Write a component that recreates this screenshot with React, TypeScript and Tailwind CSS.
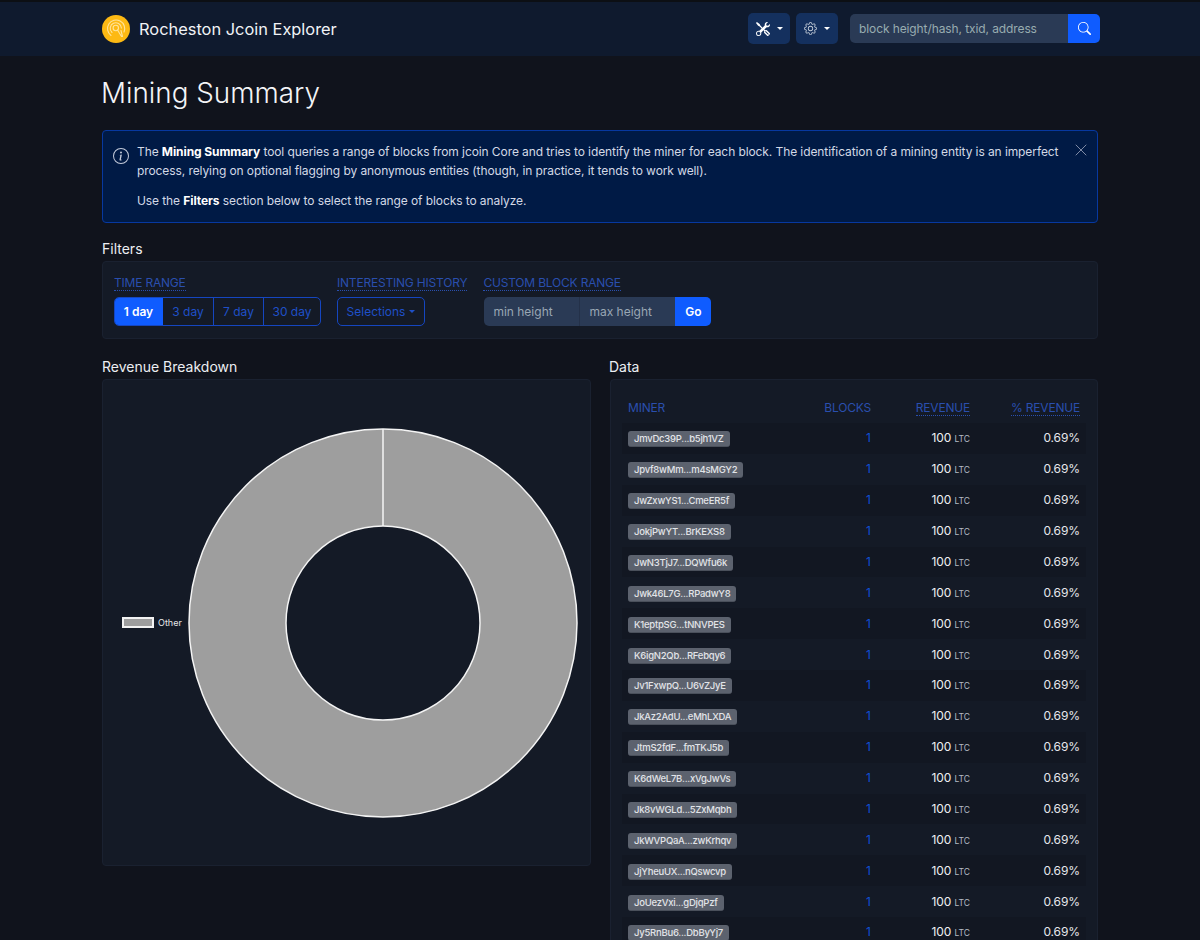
import React from "react";
import { BsTools, BsGear, BsSearch, BsInfoCircle } from "react-icons/bs";
import { X } from "lucide-react";

const miners = [
  "JmvDc39P...b5jh1VZ",
  "Jpvf8wMm...m4sMGY2",
  "JwZxwYS1...CmeER5f",
  "JokjPwYT...BrKEXS8",
  "JwN3TjJ7...DQWfu6k",
  "Jwk46L7G...RPadwY8",
  "K1eptpSG...tNNVPES",
  "K6igN2Qb...RFebqy6",
  "Jv1FxwpQ...U6vZJyE",
  "JkAz2AdU...eMhLXDA",
  "JtmS2fdF...fmTKJ5b",
  "K6dWeL7B...xVgJwVs",
  "Jk8vWGLd...5ZxMqbh",
  "JkWVPQaA...zwKrhqv",
  "JjYheuUX...nQswcvp",
  "JoUezVxi...gDjqPzf",
  "Jy5RnBu6...DbByYj7",
];

function Caret() {
  return <span className="inline-block w-0 h-0 border-l-[3px] border-r-[3px] border-t-[3px] border-l-transparent border-r-transparent border-t-current" />;
}

function Logo() {
  return (
    <svg width="28" height="28" viewBox="0 0 28 28" fill="none">
      <circle cx="14" cy="14" r="14" fill="#fdb913" />
      <g stroke="#ffe39a" strokeWidth="1.1" fill="none" strokeLinecap="round">
        <path d="M9 20.5A8.6 8.6 0 1 1 22 17" />
        <path d="M10 17.5A5.6 5.6 0 1 1 19.4 13" />
        <circle cx="13.8" cy="13" r="2.7" />
        <path d="M15.5 15l4 6.5M19 15.5l1.5 6" />
      </g>
    </svg>
  );
}

function Label({ children }: { children: React.ReactNode }) {
  return (
    <span className="text-[12px] leading-[15px] tracking-[-0.2px] uppercase text-[#2a4fae] border-b border-dotted border-[#2a4fae]">
      {children}
    </span>
  );
}

export default function App() {
  return (
    <div className="h-[940px] overflow-hidden bg-[#10131c] text-[#e4e7ec] font-['Inter',sans-serif]">
      <header className="h-[56px] bg-[#0f1a2e] border-t-2 border-[#0c0f14]">
        <div className="w-[996px] mx-auto h-full flex items-center pb-[1px]">
          <Logo />
          <span className="ml-[9px] mt-[1px] text-[16.4px] font-normal text-[#f1f3f6]">Rocheston Jcoin Explorer</span>
          <div className="ml-auto flex items-center -mr-[2px]">
            <button className="w-[42px] h-[31px] rounded-[5px] bg-[#14305e] text-white flex items-center justify-center gap-[7px]">
              <BsTools size={14} />
              <Caret />
            </button>
            <button className="ml-[6px] w-[42px] h-[31px] rounded-[5px] bg-[#14305e] text-white flex items-center justify-center gap-[7px]">
              <BsGear size={13} className="text-[#c4ccd8]" />
              <Caret />
            </button>
            <div className="ml-[12px] flex h-[29px]">
              <div className="w-[218px] bg-[#2a3a55] rounded-l-[5px] pl-[9px] flex items-center text-[12px] tracking-[-0.1px] text-[#98acb0]">
                block height/hash, txid, address
              </div>
              <button className="w-[32px] bg-[#0f5cff] rounded-r-[5px] text-white flex items-center justify-center">
                <BsSearch size={13} />
              </button>
            </div>
          </div>
        </div>
      </header>

      <main className="w-[996px] mx-auto">
        <h1 className="mt-[16px] -ml-[1px] text-[27.8px] leading-[42px] font-light text-[#f4f5f7]">Mining Summary</h1>

        <div className="mt-[16px] h-[93px] rounded-[4px] border border-[#07389f] bg-[#001a45] flex pl-[10px] pr-[12px] pt-[11px] text-[12px] tracking-[-0.09px] leading-[19px] text-[#d3d9e6]">
          <BsInfoCircle size={16} className="mt-[6px] shrink-0 text-[#c3cbdb]" />
          <div className="ml-[8px] flex-1">
            <p>
              The <b className="font-bold text-white">Mining Summary</b> tool queries a range of blocks from jcoin Core and tries to identify the miner for each block. The identification of a mining entity is an imperfect
              <br />
              process, relying on optional flagging by anonymous entities (though, in practice, it tends to work well).
            </p>
            <p className="mt-[11px]">
              Use the <b className="font-bold text-white">Filters</b> section below to select the range of blocks to analyze.
            </p>
          </div>
          <X size={20} strokeWidth={1.2} className="shrink-0 -mt-[2px] -mr-[6px] text-[#7f8ba6]" />
        </div>

        <h2 className="mt-[16px] text-[14px] leading-[20px] text-[#eceef2]">Filters</h2>
        <div className="mt-[2px] h-[78px] rounded-[4px] border border-[#1a2130] bg-[#141a26] pl-[11px] pt-[13px] flex">
          <div className="flex flex-col items-start">
            <Label>Time Range</Label>
            <div className="mt-[6px] flex h-[29px] text-[12px] text-[#1f50c8] border border-[#1546c0] rounded-[5px] overflow-hidden">
              <span className="w-[49px] -my-px -ml-px bg-[#0f5cff] text-white font-semibold flex items-center justify-center">1 day</span>
              <span className="w-[50px] flex items-center justify-center">3 day</span>
              <span className="w-[50px] border-l border-[#1546c0] flex items-center justify-center">7 day</span>
              <span className="w-[57px] border-l border-[#1546c0] flex items-center justify-center">30 day</span>
            </div>
          </div>
          <div className="ml-[16px] flex flex-col items-start">
            <Label>Interesting History</Label>
            <div className="mt-[6px] w-[88px] h-[29px] border border-[#1546c0] rounded-[5px] text-[12px] text-[#1f50c8] flex items-center justify-center gap-[4px]">
              Selections
              <Caret />
            </div>
          </div>
          <div className="ml-[16px] flex flex-col items-start">
            <Label>Custom Block Range</Label>
            <div className="mt-[6px] ml-[1px] flex h-[29px] text-[12px] text-[#99a7b4]">
              <span className="w-[96px] bg-[#2a3a55] rounded-l-[5px] pl-[9px] flex items-center border-r border-[#243149]">min height</span>
              <span className="w-[95px] bg-[#2a3a55] pl-[9px] flex items-center">max height</span>
              <span className="w-[36px] bg-[#0f5cff] rounded-r-[5px] text-white font-semibold flex items-center justify-center">Go</span>
            </div>
          </div>
        </div>

        <div className="mt-[18px] flex gap-[19px] items-start">
          <section className="w-[489px] shrink-0">
            <h2 className="text-[14px] leading-[20px] text-[#eceef2]">Revenue Breakdown</h2>
            <div className="mt-[2px] h-[487px] rounded-[4px] border border-[#1a2130] bg-[#141a26] flex items-center pl-[19px]">
              <div className="flex items-center w-[61px] shrink-0">
                <span className="w-[32px] h-[11px] bg-[#9e9e9e] border-2 border-[#f2f2f2] shrink-0" />
                <span className="ml-[4px] text-[9px] text-[#e8e8e8]">Other</span>
              </div>
              <svg width="390" height="390" viewBox="0 0 390 390" className="ml-[5px] shrink-0">
                <path
                  fillRule="evenodd"
                  d="M195 1a194 194 0 1 0 0 388a194 194 0 1 0 0-388zM195 98a97 97 0 1 1 0 194a97 97 0 1 1 0-194z"
                  fill="#9e9e9e"
                  stroke="#f4f4f4"
                  strokeWidth="1.5"
                />
                <path d="M195 1V98" stroke="#f4f4f4" strokeWidth="1.5" />
              </svg>
            </div>
          </section>

          <section className="flex-1">
            <h2 className="-ml-[1px] text-[14px] leading-[20px] text-[#eceef2]">Data</h2>
            <div className="mt-[2px] rounded-[4px] border border-[#1a2130] bg-[#141a26] px-[11px] pt-[20px] pb-[12px]">
              <div className="flex h-[23px] items-start px-[6px] text-[12px] leading-[15px] tracking-[-0.2px] text-[#2a4fae]">
                <span className="flex-1">MINER</span>
                <span className="w-[93px] text-right">BLOCKS</span>
                <span className="w-[99px] text-right"><span className="border-b border-dotted border-[#2a4fae]">REVENUE</span></span>
                <span className="w-[110px] text-right"><span className="border-b border-dotted border-[#2a4fae]">% REVENUE</span></span>
              </div>
              {miners.map((m, i) => (
                <div key={m} className={`flex h-[30.875px] items-center px-[6px] ${i % 2 === 0 ? "bg-[#121722]" : ""}`}>
                  <div className="flex-1 flex items-center">
                    <span className="mt-[2px] rounded-[3px] bg-[#5c626e] border-b border-[#4a505b] px-[6px] text-[9.5px] tracking-[-0.25px] leading-[15px] font-medium text-[#e2e4e8]">{m}</span>
                  </div>
                  <span className="w-[93px] text-right text-[12px] text-[#0f4fd6]">1</span>
                  <span className="w-[99px] text-right text-[12px] tracking-[-0.1px] font-normal text-[#eef0f3]">
                    100 <span className="text-[8.5px] tracking-normal font-normal text-[#b6bbc5]">LTC</span>
                  </span>
                  <span className="w-[110px] text-right text-[12px] tracking-[-0.1px] font-normal text-[#e6e8ec]">0.69%</span>
                </div>
              ))}
            </div>
          </section>
        </div>
      </main>
    </div>
  );
}
